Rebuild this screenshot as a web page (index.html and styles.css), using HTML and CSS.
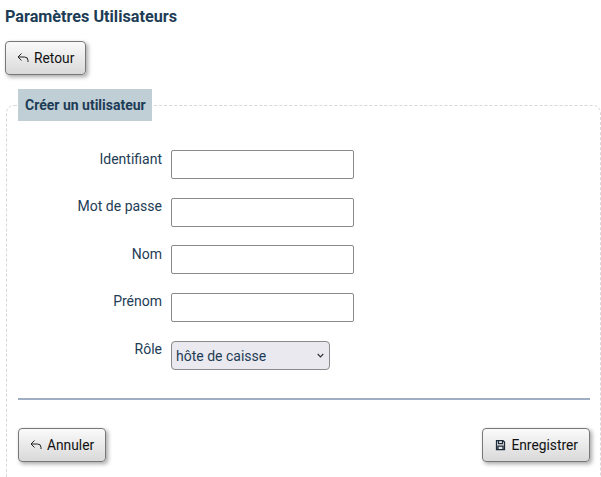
FILE: index.html
```html
<!DOCTYPE html>
<html lang="fr">
<head>
  <meta charset="UTF-8" />
  <meta name="viewport" content="width=device-width, initial-scale=1.0"/>
  <title>Paramètres Utilisateurs</title>
  <link rel="stylesheet" href="styles.css">
</head>
<body>
  <h1 class="page-title">Paramètres Utilisateurs</h1>

  <button type="button" class="btn">
    <svg class="icon" viewBox="0 0 12 12"><path d="M4.5 1.5 1 5l3.5 3.5M1 5h6.5A3.5 3.5 0 0 1 11 8.5V10"/></svg>
    Retour
  </button>

  <fieldset class="panel">
    <legend>Créer un utilisateur</legend>
    <form>
      <div class="form-group">
        <label for="login">Identifiant</label>
        <input type="text" id="login">
      </div>
      <div class="form-group">
        <label for="password">Mot de passe</label>
        <input type="password" id="password">
      </div>
      <div class="form-group">
        <label for="lastname">Nom</label>
        <input type="text" id="lastname">
      </div>
      <div class="form-group">
        <label for="firstname">Prénom</label>
        <input type="text" id="firstname">
      </div>
      <div class="form-group">
        <label for="role">Rôle</label>
        <select id="role">
          <option>hôte de caisse</option>
        </select>
      </div>
      <hr>
      <div class="form-actions">
        <button type="button" class="btn">
          <svg class="icon" viewBox="0 0 12 12"><path d="M4.5 1.5 1 5l3.5 3.5M1 5h6.5A3.5 3.5 0 0 1 11 8.5V10"/></svg>
          Annuler
        </button>
        <button type="submit" class="btn">
          <svg class="icon icon-save" viewBox="0 0 12 12"><path d="M2.5 1.5h6.5l1.5 1.5v7.5h-8zM4.5 1.5v3h4v-3M4 10.5V7h5v3.5"/></svg>
          Enregistrer
        </button>
      </div>
    </form>
  </fieldset>
</body>
</html>
```

FILE: styles.css
```css
html, body {
  height: 477px;
  overflow: hidden;
}
body {
  margin: 0;
  padding: 0 0 0 5px;
  box-sizing: border-box;
  background-color: #fff;
  color: #1d3c55;
  font-family: Roboto, sans-serif;
  font-size: 14px;
}
.page-title {
  margin: 0;
  padding-top: 7px;
  font-size: 16.2px;
  line-height: 19px;
  font-weight: 700;
}
.btn {
  display: inline-flex;
  align-items: center;
  justify-content: center;
  gap: 5px;
  height: 34px;
  padding: 0 11px;
  border: 1px solid #777;
  border-radius: 4px;
  background: linear-gradient(#fafafa, #d9d9d9);
  box-shadow: 2px 2px 4px rgba(0,0,0,0.35);
  color: #111;
  font-family: Roboto, sans-serif;
  font-size: 13.8px;
  cursor: pointer;
}
.page-title + .btn {
  margin-top: 15px;
}
.icon {
  width: 12px;
  height: 12px;
  fill: none;
  stroke: #222;
  stroke-width: 1;
}
.icon-save {
  stroke: #1d2a3a;
  stroke-width: 1.25;
}
.panel {
  margin: 14px 0 0 1px;
  padding: 0 10px 0 11px;
  height: 420px;
  border: 1px dashed #d8d8d8;
  border-radius: 8px;
  min-width: 0;
}
.panel legend {
  padding: 0 6px 0 7px;
  height: 32px;
  line-height: 32px;
  background-color: #c0ced6;
  font-weight: 700;
  font-size: 14px;
}
form {
  padding-top: 29px;
}
.form-group {
  display: flex;
  align-items: flex-start;
  gap: 9px;
  height: 47.5px;
}
.form-group label {
  width: 144px;
  padding-top: 0.7px;
  text-align: right;
  line-height: 16px;
}
input {
  width: 183px;
  height: 29px;
  box-sizing: border-box;
  border: 1px solid #8a8a8a;
  border-radius: 2px;
  background-color: #fff;
}
select {
  width: 159px;
  height: 29px;
  margin-top: 1px;
  box-sizing: border-box;
  padding-left: 4px;
  border: 1px solid #8a8a8a;
  border-radius: 4px;
  appearance: none;
  background-color: #e9e9ef;
  background-image: url("data:image/svg+xml,%3Csvg xmlns='http://www.w3.org/2000/svg' width='7' height='5'%3E%3Cpath d='M.7 1l2.8 2.8L6.3 1' fill='none' stroke='%23333' stroke-width='1.2'/%3E%3C/svg%3E");
  background-repeat: no-repeat;
  background-position: right 5px center;
  color: #1d3c55;
  font-family: Roboto, sans-serif;
  font-size: 14px;
}
hr {
  margin: 10px 0 0;
  height: 2px;
  border: none;
  background-color: #a0aec4;
}
.form-actions {
  display: flex;
  justify-content: space-between;
  margin-top: 28px;
}
```
